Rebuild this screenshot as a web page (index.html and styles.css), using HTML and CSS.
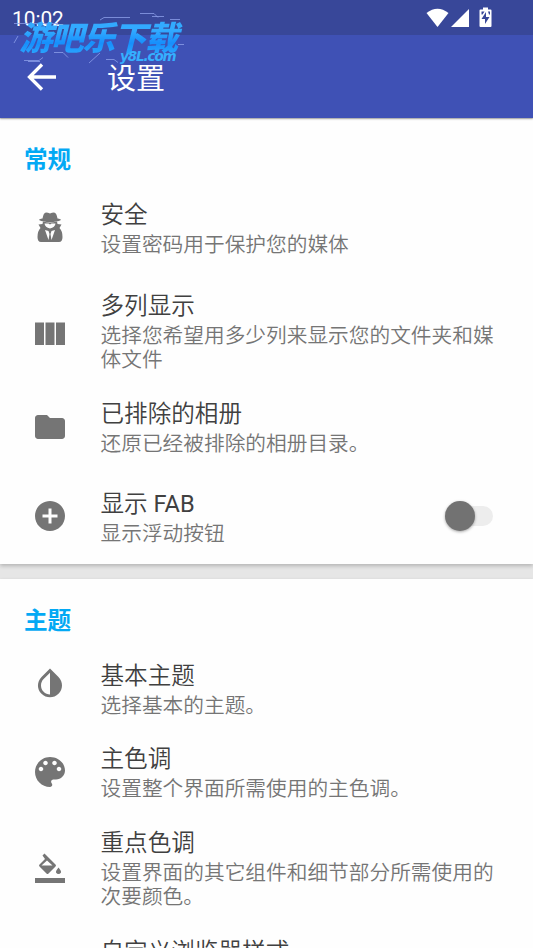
FILE: index.html
```
<!DOCTYPE html>
<html lang="zh-CN">
<head>
<meta charset="utf-8">
<title>设置</title>
<link rel="stylesheet" href="styles.css">
</head>
<body>
<header class="top">
  <div class="status">
    <span class="time">10:02</span>
    <svg class="status-icons" width="68" height="24" viewBox="0 0 68 24" fill="#fff">
      <path d="M0.500 7Q11.500-1.500 22.500 7L11.500 21Z"/>
      <path d="M43 3V21H25Z"/>
      <path fill-rule="evenodd" d="M57 1.500h5v2h2.500q1 0 1 1V20q0 1-1 1h-10q-1 0-1-1V4.500q0-1 1-1H57ZM60 6l-4.500 7h3.500v5l4.500-7H60ZM55.500 5.500h3l-2 3h-1ZM62 5.500h2v3h-1Z"/>
    </svg>
  </div>
  <div class="toolbar">
    <svg class="back" width="30" height="28" viewBox="0 0 30 28" fill="none" stroke="#fff" stroke-width="3.300"><path d="M15 1.500L2.500 14L15 26.500M2.500 14H29"/></svg>
    <h1>设置</h1>
  </div>
  <div class="watermark">
    <svg class="traces" width="190" height="60" viewBox="0 0 190 60" fill="none" stroke="#8c9ee8" stroke-width=".8">
      <path d="M14 13.500h44M100 10l4-2.500h26M140 3.500h14l4 4M152 6.500h12M170 9.500h10M18 26l-4 7M24 50.500h15l4-3M28 51.500h12M89 53l11-10M106 49.500h8l4 3M178 34.500h6M54 42.500h9l5 5"/>
    </svg>
    <span class="brand">游吧乐下载</span>
    <span class="site">y8L.com</span>
  </div>
</header>
<main>
  <section class="card">
    <h2>常规</h2>
    <div class="row spaced">
      <svg class="icon up" viewBox="0 0 30 30"><path d="M7.500 6.500Q8.500 .5 11 .5Q13 .5 15 1.500Q17 .5 19 .5Q21.500 .5 22.500 6.500Q26 7 26 8Q22 10 15 10T4 8Q4 7 7.500 6.500Z"/><path fill-rule="evenodd" d="M8 9.500Q15 11.500 22 9.500L22.500 12L26.500 12.500L24.500 16Q27.500 19 27.500 25Q27.500 30 24 30H6Q2.500 30 2.500 25Q2.500 19 5.500 16L3.500 12.500L7.500 12ZM9.500 11.500Q10 15.500 15 16.500Q20 15.500 20.500 11.500L16.500 11.500L15 12.500L13.500 11.500ZM10 18L13.500 28L14.500 22L13.500 19ZM20 18L16.500 28L15.500 22L16.500 19Z"/></svg>
      <div class="text"><h3>安全</h3><p>设置密码用于保护您的媒体</p></div>
    </div>
    <div class="row">
      <svg class="icon low" viewBox="0 0 30 30"><path d="M0 3.500h9V26H0zM10.500 3.500h9V26h-9zM21 3.500h9V26h-9z"/></svg>
      <div class="text"><h3>多列显示</h3><p>选择您希望用多少列来显示您的文件夹和媒体文件</p></div>
    </div>
    <div class="row spaced">
      <svg class="icon" viewBox="2 2 20 20"><path d="M10 4H4c-1.100 0-2 .9-2 2v12c0 1.100.9 2 2 2h16c1.100 0 2-.9 2-2V8c0-1.100-.9-2-2-2h-8l-2-2z"/></svg>
      <div class="text"><h3>已排除的相册</h3><p>还原已经被排除的相册目录。</p></div>
    </div>
    <div class="row">
      <svg class="icon up" viewBox="2 2 20 20"><path d="M12 2C6.480 2 2 6.480 2 12s4.480 10 10 10 10-4.480 10-10S17.520 2 12 2zm5 11h-4v4h-2v-4H7v-2h4V7h2v4h4v2z"/></svg>
      <div class="text"><h3>显示 <span class="latin">FAB</span></h3><p>显示浮动按钮</p></div>
      <span class="switch"></span>
    </div>
  </section>
  <section class="card">
    <h2>主题</h2>
    <div class="row">
      <svg class="icon drop" viewBox="2 2 20 20"><path d="M17.660 7.930L12 2.270 6.340 7.930c-3.120 3.120-3.120 8.190 0 11.310C7.900 20.800 9.950 21.580 12 21.580c2.050 0 4.100-.78 5.660-2.340 3.120-3.120 3.120-8.190 0-11.310zM12 19.590c-1.600 0-3.110-.62-4.240-1.760C6.620 16.690 6 15.190 6 13.590s.62-3.110 1.760-4.240L12 5.100v14.490z"/></svg>
      <div class="text"><h3>基本主题</h3><p>选择基本的主题。</p></div>
    </div>
    <div class="row">
      <svg class="icon up" viewBox="2 2 20 20"><path d="M12 2C6.490 2 2 6.490 2 12s4.490 10 10 10c.83 0 1.500-.67 1.500-1.500 0-.39-.15-.74-.39-1.010-.23-.26-.38-.61-.38-.99 0-.83.67-1.500 1.500-1.500H16c3.310 0 6-2.690 6-6 0-4.960-4.490-9-10-9zm-6 9.500c-.83 0-1.500-.67-1.500-1.500S5.170 8.500 6 8.500 7.500 9.170 7.500 10 6.830 11.500 6 11.500zm3-4C8.170 7.500 7.500 6.830 7.500 6S8.170 4.500 9 4.500s1.500.67 1.500 1.500S9.830 7.500 9 7.500zm6 0c-.83 0-1.500-.67-1.500-1.500s.67-1.500 1.500-1.500 1.500.67 1.500 1.500-.67 1.500-1.500 1.500zm3 4c-.83 0-1.500-.67-1.500-1.500s.67-1.500 1.500-1.500 1.500.67 1.500 1.500-.67 1.500-1.500 1.500z"/></svg>
      <div class="text"><h3>主色调</h3><p>设置整个界面所需使用的主色调。</p></div>
    </div>
    <div class="row">
      <svg class="icon" viewBox="0 0 30 30"><path fill-rule="evenodd" d="M9.500.5L20.500 11.500Q21.500 12.500 20.500 13.500L13.500 20.500Q12.500 21.500 11.500 20.500L4.500 13.500Q3.500 12.500 4.500 11.500L10 6L7.500 2.500ZM12 7.500L6.500 12.500H17.500Z"/><path d="M23.500 14.500Q20.500 18 21 19.500Q22 21 23.500 21T26 19.500Q26.500 18 23.500 14.500ZM0 25h30v5H0z"/></svg>
      <div class="text"><h3>重点色调</h3><p>设置界面的其它组件和细节部分所需使用的次要颜色。</p></div>
    </div>
    <div class="row">
      <div class="icon"></div>
      <div class="text"><h3>自定义浏览器样式</h3></div>
    </div>
  </section>
</main>
</body>
</html>
```

FILE: styles.css
```
* { box-sizing: border-box; margin: 0; padding: 0; }
html, body { height: 948px; overflow: hidden; }
body {
  display: flex;
  flex-direction: column;
  background: #e6e6e6;
  font-family: Roboto, "Noto Sans CJK SC", sans-serif;
}
.top {
  position: relative;
  flex: none;
  height: 118px;
  background: #3f51b5;
  box-shadow: 0 1px 2px rgba(0, 0, 0, .3);
}
.status {
  display: flex;
  justify-content: space-between;
  height: 35px;
  padding: 6px 39px 0 12px;
  background: #384799;
  color: #fff;
}
.time { font-size: 20.800px; line-height: 26px; }
.toolbar { display: flex; align-items: center; height: 83px; padding-left: 27px; }
.back { margin-right: 50px; }
h1 { color: #fff; font-size: 29px; font-weight: 400; line-height: 40px; padding-top: 4px; }
.watermark { position: absolute; left: 0; top: 10px; width: 190px; height: 60px; }
.traces { position: absolute; left: 0; top: 0; }
.brand {
  position: absolute;
  left: 18px;
  top: 8px;
  padding: 0 4px;
  font-size: 33px;
  font-weight: 900;
  line-height: 42px;
  letter-spacing: -1.500px;
  white-space: nowrap;
  color: transparent;
  background: linear-gradient(#32aaff 30%, #168ffc 60%, #35b0ff);
  -webkit-background-clip: text;
  background-clip: text;
  transform: skewX(-14deg);
}
.site {
  position: absolute;
  left: 120px;
  top: 37px;
  color: #35b0ff;
  font: italic 700 13.500px/18px "DejaVu Sans", sans-serif;
  letter-spacing: -1.100px;
}
main { flex: 1; min-height: 0; padding-top: 1px; }
.card {
  margin-bottom: 14.500px;
  background: #fefefe;
  box-shadow: 0 2px 4px rgba(0, 0, 0, .22);
  padding: 24px 24px 4px;
}
.card + .card { padding-top: 25px; }
h2 { color: #03a9f4; font-size: 23.600px; font-weight: 700; line-height: 34px; margin-bottom: 10.500px; }
.row { display: flex; align-items: center; padding: 13.700px 12px 13.700px 10.500px; }
.row.spaced { margin-bottom: 7px; }
.icon { flex: none; position: relative; top: -1px; width: 30px; height: 30px; margin-right: 36px; fill: #757575; }
.icon.up { top: -2px; }
.icon.low { top: 1.500px; }
.icon.drop { top: -7px; }
.text { flex: 1; min-width: 0; }
h3 { color: #404040; font-size: 23.600px; font-weight: 350; line-height: 28px; white-space: nowrap; }
.latin { font-weight: 400; }
p { margin-top: 3.800px; margin-right: -6px; color: #757575; font-size: 20.700px; font-weight: 350; line-height: 24.400px; }
.switch { position: relative; top: -2px; width: 48px; height: 30px; margin-right: 4px; }
.switch::before {
  content: "";
  position: absolute;
  left: 8px;
  top: 5px;
  width: 40px;
  height: 20px;
  border-radius: 10px;
  background: #ededed;
}
.switch::after {
  content: "";
  position: absolute;
  left: 0;
  top: 0;
  width: 30px;
  height: 30px;
  border-radius: 50%;
  background: #727272;
  box-shadow: 0 1px 3px rgba(0, 0, 0, .35);
}
```
